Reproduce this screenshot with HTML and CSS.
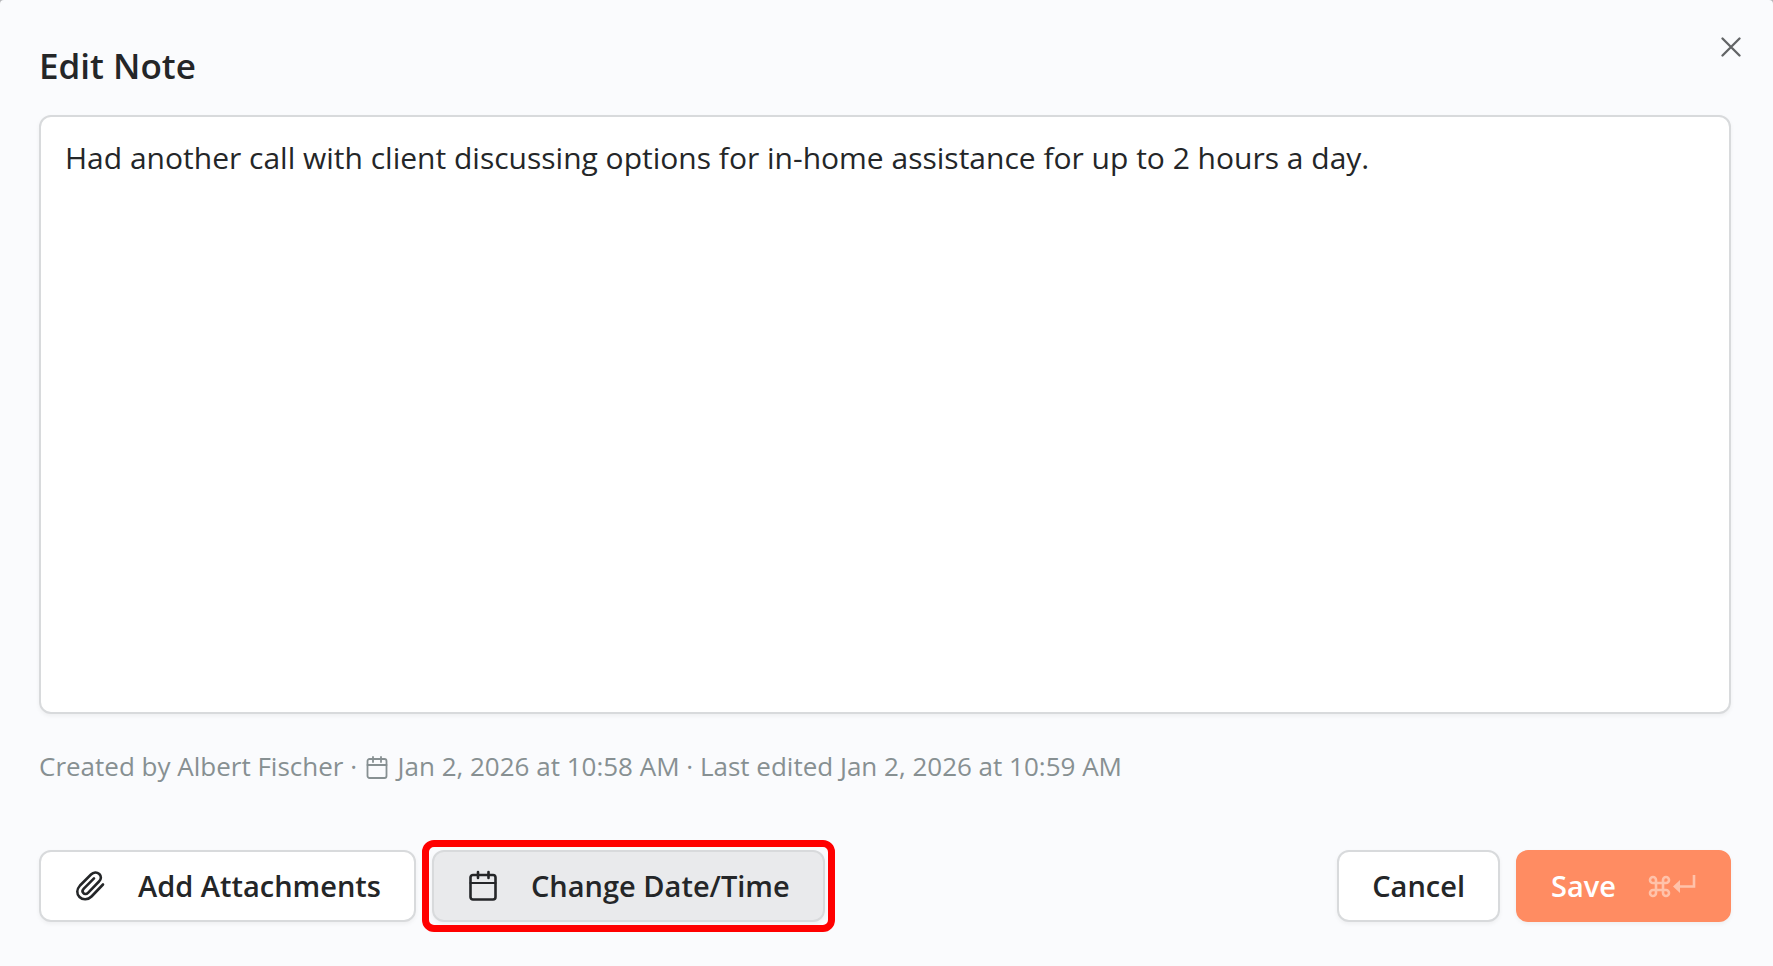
FILE: index.html
```html
<!DOCTYPE html>
<html lang="en">
<head>
<meta charset="utf-8">
<title>Edit Note</title>
<link rel="stylesheet" href="styles.css">
</head>
<body>
<form class="dialog" role="dialog" aria-labelledby="dialog-title">
  <header class="dialog-header">
    <h1 class="title" id="dialog-title">Edit Note</h1>
    <button class="close" type="button" aria-label="Close">
      <svg class="close-icon" viewBox="0 0 20 20" fill="none" stroke="currentColor" stroke-width="2.300" stroke-linecap="round"><path d="M1.500 1.500l17 17M18.500 1.500l-17 17"/></svg>
    </button>
  </header>
  <textarea class="note" aria-label="Note">Had another call with client discussing options for in-home assistance for up to 2 hours a day.</textarea>
  <p class="meta">Created by Albert Fischer · <svg class="meta-icon" viewBox="0 0 24 24" fill="none" stroke="currentColor" stroke-width="1.800" stroke-linecap="round"><rect x="2.500" y="3" width="19" height="19" rx="2"/><path d="M8 1v5M16 1v5M2.500 9h19"/></svg> Jan 2, 2026 at 10:58 AM · Last edited Jan 2, 2026 at 10:59 AM</p>
  <footer class="actions">
    <button class="btn" type="button">
      <svg class="btn-icon" viewBox="0 0 32 32" fill="none" stroke="currentColor" stroke-width="2.600" stroke-linecap="round" stroke-linejoin="round"><path d="M29 14.500L17.500 26.500C13.800 30.200 8.500 30 5.500 27C2.500 24 2.500 19.500 6 15.500L17 4.500C19.500 2 23 2 25.300 4C27.500 6.200 27.400 9.200 25 11.500L14 22.800C12.500 24.300 10.500 24.400 9.400 23.200C8.200 22 8.300 20.200 9.800 18.700L20 8.400"/></svg>
      Add Attachments
    </button>
    <button class="btn btn-active" type="button">
      <svg class="btn-icon" viewBox="0 0 32 32" fill="none" stroke="currentColor" stroke-width="2.600" stroke-linecap="round"><rect x="3.500" y="5" width="25" height="24.500" rx="2.500"/><path d="M11 2v6M21.500 2v6"/><path d="M3.500 13h25" stroke-width="2"/></svg>
      Change Date/Time
    </button>
    <button class="btn btn-cancel" type="button">Cancel</button>
    <button class="btn btn-save" type="submit">Save
      <svg class="keys" viewBox="0 0 48 24" fill="none" stroke="currentColor" stroke-width="2.600"><path d="M8 9H5a3 3 0 1 1 3-3v13a3 3 0 1 1-3-3h13a3 3 0 1 1-3 3V6a3 3 0 1 1 3 3z"/><path d="M46 1v11.500H31"/><path d="M32 6v13l-7-6.500z" fill="currentColor" stroke="none"/></svg>
    </button>
  </footer>
</form>
</body>
</html>
```
FILE: styles.css
```css
* { box-sizing: border-box; }
body {
  margin: 0;
  background: #b4b5b8;
  color: #242628;
  font-family: "Open Sans", sans-serif;
}
.dialog {
  display: flex;
  flex-direction: column;
  min-height: 100vh;
  padding: 40px 42px 44px 39px;
  background: #fafbfd;
  border-radius: 4px 4px 0 0;
}
.dialog-header {
  display: flex;
  justify-content: space-between;
  align-items: flex-start;
  margin-bottom: 23px;
}
.title { margin: 0; font-size: 35px; line-height: 52px; font-weight: 600; }
.close {
  display: flex;
  margin: -3px -10px 0 0;
  padding: 0;
  border: 0;
  background: none;
  color: #626466;
}
.close-icon { width: 20px; height: 20px; }
.note {
  flex: 1;
  width: 100%;
  padding: 19px 24px;
  border: 2px solid #d8dadc;
  border-radius: 12px;
  background: #fff;
  color: inherit;
  font: 400 30px/44px "Open Sans", sans-serif;
  box-shadow: 0 2px 4px rgba(0, 0, 0, 0.05);
  resize: none;
  outline: 0;
}
.meta { margin: 32px 0 64px; color: #879092; font-size: 26px; line-height: 40px; }
.meta-icon { width: 24px; height: 24px; margin: 0 2px 0 1px; vertical-align: -4px; }
.actions { display: flex; gap: 16px; }
.btn {
  position: relative;
  display: flex;
  align-items: center;
  height: 72px;
  padding: 0 33px;
  border: 2px solid #d8dadc;
  border-radius: 12px;
  background: #fff;
  color: #242628;
  font: 600 29px/44px "Open Sans", sans-serif;
  box-shadow: 0 2px 4px rgba(0, 0, 0, 0.05);
}
.btn-icon { width: 32px; height: 32px; margin-right: 32px; }
.btn-active { background: #e9eaec; }
.btn-active::after {
  content: "";
  position: absolute;
  inset: -12px;
  border: 7px solid #f00;
  border-radius: 12px;
}
.btn-cancel { margin-left: auto; }
.btn-save { border-color: #ff8c62; background: #ff8c62; color: #fff; }
.keys { width: 48px; height: 24px; margin-left: 32px; color: #ffc2aa; }
```
